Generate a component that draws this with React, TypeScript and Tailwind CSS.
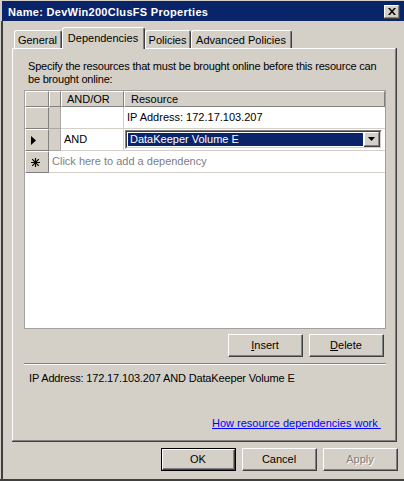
import React from "react";
import type { FC } from "react";

type BtnProps = {
    children?: React.ReactNode;
    def?: boolean;
    disabled?: boolean;
};

// classic raised push button, 75x23
const Button: FC<BtnProps> = ({ children, def, disabled }) => {
    return (
        <div className={def ? "w-[75px] h-[23px] flex border border-black" : "w-[75px] h-[23px] flex"}>
            <div className="flex-1 flex border-t border-l border-r border-b border-t-white border-l-white border-r-[#404040] border-b-[#404040]">
                <div
                    className={
                        disabled
                            ? "flex-1 flex items-center justify-center border-r border-b border-[#808080] text-[#808080] [text-shadow:1px_1px_0_#ffffff]"
                            : "flex-1 flex items-center justify-center border-r border-b border-[#808080] text-black"
                    }
                >
                    {children}
                </div>
            </div>
        </div>
    );
};

const Tab: FC<{ label: string; w: string; active?: boolean }> = ({ label, w, active }) => {
    if (active) {
        return (
            <div className={`${w} h-[22px] -mb-px relative z-10 bg-[#d4d0c8] flex border-t border-l border-r border-t-white border-l-white border-r-[#404040] rounded-t-[3px]`}>
                <div className="flex-1 border-r border-[#808080] pt-[4px] text-center">{label}</div>
            </div>
        );
    }
    return (
        <div className={`${w} h-[18px] bg-[#d4d0c8] flex border-t border-l border-r border-t-white border-l-white border-r-[#404040] rounded-t-[3px]`}>
            <div className="flex-1 border-r border-[#808080] pt-[3px] text-center">{label}</div>
        </div>
    );
};

const RowHead: FC<{ children?: React.ReactNode }> = ({ children }) => (
    <div className="w-[24px] bg-[#d4d0c8] border-t border-l border-r border-b border-t-white border-l-white border-r-[#808080] border-b-[#808080] flex items-center pl-[5px]">
        {children}
    </div>
);

const Narrow = () => (
    <div className="w-[12px] bg-[#d4d0c8] border-r border-b border-[#a8a8a8]"></div>
);

const HeadCell: FC<{ w: string; children?: React.ReactNode }> = ({ w, children }) => (
    <div className={`${w} bg-[#d4d0c8] border-t border-l border-r border-b border-t-white border-l-white border-r-[#808080] border-b-[#808080] flex items-center`}>
        {children}
    </div>
);

const App: FC = () => {
    return (
        <div className="w-[404px] h-[481px] bg-[#d4d0c8] flex flex-col overflow-hidden font-['Liberation_Sans',Arial,sans-serif] text-[11px] leading-[13px] text-black">
            <div className="h-px"></div>
            {/* title bar */}
            <div className="h-[20px] ml-[2px] bg-[#0a246a] flex items-center justify-between pl-[6px] pr-[4px]">
                <span className="text-white font-bold text-[11px] tracking-[0.3px] pt-[2px]">Name: DevWin200ClusFS Properties</span>
                <div className="w-[16px] h-[14px] flex border-r border-b border-[#404040] mt-[1px]">
                    <div className="flex-1 flex items-center justify-center bg-[#d4d0c8] border-t border-l border-r border-b border-t-white border-l-white border-r-[#808080] border-b-[#808080]">
                        <svg width="8" height="7" viewBox="0 0 8 7">
                            <path d="M0 0h2l2 2.5L6 0h2L5 3.5 8 7H6L4 4.5 2 7H0l3-3.5z" fill="#000" />
                        </svg>
                    </div>
                </div>
            </div>

            <div className="flex-1 flex">
                <div className="w-px"></div>
                <div className="w-[2px] bg-[#404040]"></div>
                <div className="flex-1 flex flex-col">
                    {/* tabs */}
                    <div className="mt-[6px] h-[21px] pl-[11px] flex items-end">
                        <Tab label="General" w="w-[48px]" />
                        <Tab label="Dependencies" w="w-[83px]" active />
                        <Tab label="Policies" w="w-[46px]" />
                        <Tab label="Advanced Policies" w="w-[101px]" />
                    </div>

                    {/* tab page */}
                    <div className="ml-[9px] w-[385px] h-[394px] flex border-r border-b border-[#404040]">
                        <div className="flex-1 flex flex-col border-t border-l border-r border-b border-t-white border-l-white border-r-[#808080] border-b-[#808080]">
                            <p className="ml-[15px] mt-[11px] whitespace-nowrap tracking-[-0.2px]">
                                Specify the resources that must be brought online before this resource can<br />
                                be brought online:
                            </p>

                            {/* dependency grid */}
                            <div className="ml-[11px] mt-[4px] w-[362px] h-[239px] border border-[#a0a0a0] bg-white flex flex-col">
                                <div className="flex h-[16px]">
                                    <HeadCell w="w-[24px]" />
                                    <HeadCell w="w-[12px]" />
                                    <HeadCell w="w-[63px] pl-[5px]">AND/OR</HeadCell>
                                    <HeadCell w="flex-1 pl-[6px]">Resource</HeadCell>
                                </div>
                                <div className="flex h-[22px]">
                                    <RowHead />
                                    <Narrow />
                                    <div className="w-[63px] border-r border-b border-[#d4d0c8]"></div>
                                    <div className="flex-1 border-b border-[#d4d0c8] flex items-center pl-[3px]">IP Address: 172.17.103.207</div>
                                </div>
                                <div className="flex h-[22px]">
                                    <RowHead>
                                        <svg width="5" height="9" viewBox="0 0 5 9">
                                            <path d="M0 0L5 4.5L0 9z" fill="#000" />
                                        </svg>
                                    </RowHead>
                                    <Narrow />
                                    <div className="w-[63px] border-r border-b border-[#d4d0c8] flex items-center pl-[3px]">AND</div>
                                    <div className="flex-1 border-b border-[#d4d0c8] flex items-center pl-px">
                                        <div className="w-[257px] h-[19px] flex border-t border-l border-r border-b border-t-[#808080] border-l-[#808080] border-r-white border-b-white">
                                            <div className="flex-1 flex border-t border-l border-r border-b border-t-[#404040] border-l-[#404040] border-r-[#d4d0c8] border-b-[#d4d0c8] bg-white">
                                                <div className="flex-1 bg-[#0a246a] text-white flex items-center pl-[2px] m-px">DataKeeper Volume E</div>
                                                <div className="w-[16px] flex border-r border-b border-[#404040]">
                                                    <div className="flex-1 bg-[#d4d0c8] flex items-center justify-center border-t border-l border-r border-b border-t-white border-l-white border-r-[#808080] border-b-[#808080]">
                                                        <svg width="7" height="4" viewBox="0 0 7 4">
                                                            <path d="M0 0h7L3.5 4z" fill="#000" />
                                                        </svg>
                                                    </div>
                                                </div>
                                            </div>
                                        </div>
                                    </div>
                                </div>
                                <div className="flex h-[22px]">
                                    <RowHead>
                                        <svg width="9" height="9" viewBox="0 0 9 9">
                                            <path d="M4.5 0V9M0 4.5H9M1.2 1.2L7.8 7.8M7.8 1.2L1.2 7.8" stroke="#000" strokeWidth="1.2" />
                                        </svg>
                                    </RowHead>
                                    <div className="flex-1 border-b border-[#d4d0c8] flex items-center pl-[3px] text-[#808080]">
                                        Click here to add a dependency
                                    </div>
                                </div>
                            </div>

                            <div className="mt-[5px] ml-[215px] flex gap-[6px]">
                                <Button><u>I</u>nsert</Button>
                                <Button><u>D</u>elete</Button>
                            </div>

                            <div className="mt-[6px] ml-[11px] w-[362px] border-t border-b border-t-[#808080] border-b-white"></div>

                            <p className="mt-[7px] ml-[16px] tracking-[-0.15px]">IP Address: 172.17.103.207 AND DataKeeper Volume E</p>

                            <a className="mt-[32px] ml-[199px] text-[#0000ff] underline whitespace-pre">How resource dependencies work </a>
                        </div>
                    </div>

                    {/* dialog buttons */}
                    <div className="mt-[6px] ml-[158px] flex gap-[6px]">
                        <Button def>OK</Button>
                        <Button>Cancel</Button>
                        <Button disabled>Apply</Button>
                    </div>
                </div>
            </div>
            <div className="h-[2px] bg-[#404040]"></div>
        </div>
    );
};

export default App;
